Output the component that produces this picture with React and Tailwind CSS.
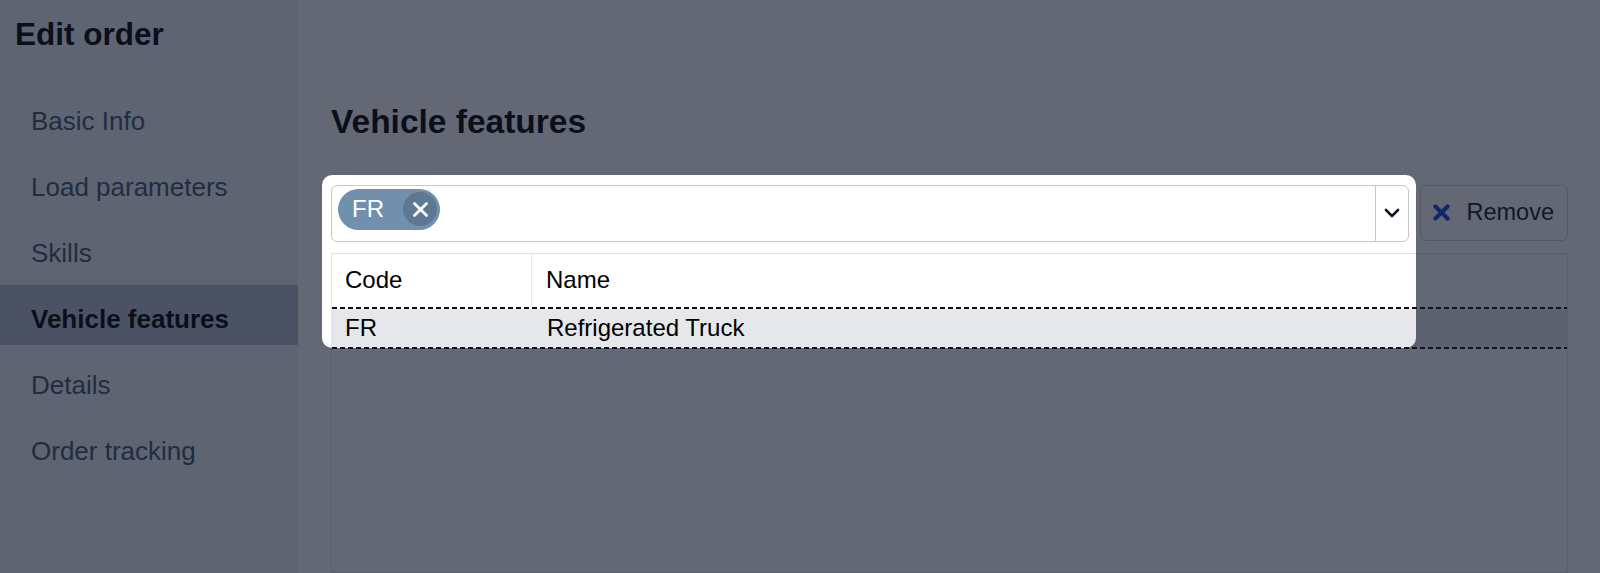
import React from "react";

const NAV = [
  "Basic Info",
  "Load parameters",
  "Skills",
  "Vehicle features",
  "Details",
  "Order tracking",
];

function CrossIcon({ className, size = 14, stroke = 3 }) {
  return (
    <svg width={size} height={size} viewBox="0 0 14 14" className={className} fill="none">
      <path d="M2 2 L12 12 M12 2 L2 12" stroke="currentColor" strokeWidth={stroke} strokeLinecap="round" />
    </svg>
  );
}

function Chevron() {
  return (
    <svg width="16" height="10" viewBox="0 0 16 10" fill="none">
      <path d="M2 2 L8 8 L14 2" stroke="#111827" strokeWidth="2.6" strokeLinecap="round" strokeLinejoin="round" />
    </svg>
  );
}

function DashedLine() {
  return <div className="h-[2px] w-full bg-[repeating-linear-gradient(90deg,#0b0f19_0_5px,transparent_5px_8px)]" />;
}

export default function App() {
  const active = "Vehicle features";

  return (
    <div className="relative flex h-[573px] w-full overflow-hidden bg-white font-['Liberation_Sans',Arial,sans-serif]">
      {/* sidebar */}
      <aside className="w-[298px] shrink-0 bg-[#f1f3f6] pt-[19px]">
        <h1 className="pl-[15px] text-[31.5px] font-bold leading-none text-black">Edit order</h1>
        <nav className="mt-[36px] flex flex-col gap-[6px]">
          {NAV.map((item) => (
            <div
              key={item}
              className={`flex h-[60px] items-center pl-[31px] pt-2 text-[26px] leading-none ${
                item === active ? "bg-[#b9c1cd] font-bold text-black" : "text-slate-600"
              }`}
            >
              {item}
            </div>
          ))}
        </nav>
      </aside>

      {/* main */}
      <main className="flex min-w-0 flex-1 flex-col pl-[33px] pr-[32px] pt-[105px]">
        <h2 className="text-[33.5px] font-bold leading-none text-black">Vehicle features</h2>

        <div className="mt-[46px] flex gap-[11px]">
          <div className="flex h-[57px] flex-1 rounded-[6px] border border-[#c4c7d4] bg-white">
            <div className="flex flex-1 items-start pl-[6px] pt-[3px]">
              <span className="flex h-[41px] items-center rounded-full bg-[#7190ad] pl-[14px] pr-[3px] text-[24px] text-white">
                FR
                <span className="ml-[19px] flex h-[34px] w-[34px] items-center justify-center rounded-full bg-[#5d7894]">
                  <CrossIcon size={17} stroke={2.3} />
                </span>
              </span>
            </div>
            <div className="flex w-[33px] items-center justify-center border-l border-[#c4c7d4]">
              <Chevron />
            </div>
          </div>
          <button
            type="button"
            className="flex h-[56px] items-center gap-[16px] rounded-[6px] border border-gray-300 bg-white pl-[12px] pr-[13px] text-[23.5px] text-gray-900"
          >
            <CrossIcon className="text-blue-700" size={17} stroke={3.5} />
            Remove
          </button>
        </div>

        <div className="mt-[11px] flex flex-1 flex-col border border-[#dfe2e6]">
          <div className="flex h-[53px] text-[24px] text-black">
            <div className="flex w-[200px] items-center border-r border-[#e5e7eb] pl-[13px]">Code</div>
            <div className="flex flex-1 items-center pl-[14px]">Name</div>
          </div>
          <DashedLine />
          <div className="flex h-[38px] bg-[#e5e7eb] text-[24px] text-black">
            <div className="flex w-[201px] items-center pl-[13px]">FR</div>
            <div className="flex flex-1 items-center pl-[14px]">Refrigerated Truck</div>
          </div>
          <DashedLine />
          <div className="flex-1" />
        </div>
      </main>

      {/* tour spotlight */}
      <div className="pointer-events-none absolute left-[322px] top-[175px] h-[173px] w-[1094px] rounded-[10px] shadow-[0_0_0_2000px_rgba(15,23,42,0.65)]" />
    </div>
  );
}
